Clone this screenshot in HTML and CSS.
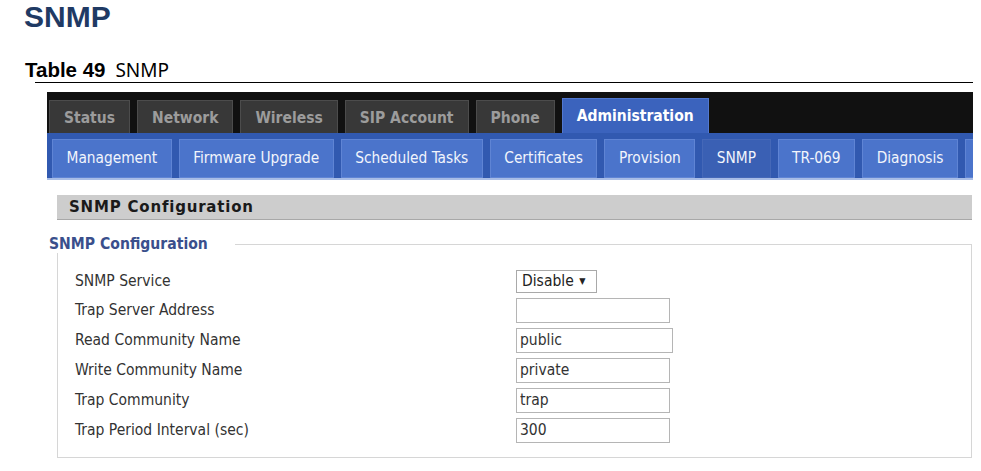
FILE: index.html
```html
<!DOCTYPE html>
<html lang="en">
<head>
  <meta charset="UTF-8">
  <title>SNMP</title>
  <link rel="stylesheet" href="styles.css">
</head>
<body>
  <div class="doc">
    <h1 class="doc-title">SNMP</h1>
    <p class="caption"><b>Table 49</b> <span>SNMP</span></p>

    <div class="shot">
      <!-- main menu -->
      <div class="top-nav">
        <a class="top-tab">Status</a>
        <a class="top-tab">Network</a>
        <a class="top-tab">Wireless</a>
        <a class="top-tab">SIP Account</a>
        <a class="top-tab">Phone</a>
        <a class="top-tab active">Administration</a>
      </div>
      <div class="sub-nav">
        <a class="sub-tab">Management</a>
        <a class="sub-tab">Firmware Upgrade</a>
        <a class="sub-tab">Scheduled Tasks</a>
        <a class="sub-tab">Certificates</a>
        <a class="sub-tab">Provision</a>
        <a class="sub-tab active">SNMP</a>
        <a class="sub-tab">TR-069</a>
        <a class="sub-tab">Diagnosis</a>
        <a class="sub-tab more"></a>
      </div>

      <div class="content">
        <div class="section-head">SNMP Configuration</div>

        <fieldset class="group">
          <legend>SNMP Configuration</legend>
          <div class="form">
            <div class="row row-select">
              <label>SNMP Service</label>
              <div class="select">Disable <span class="arrow">&#9660;</span></div>
            </div>
            <div class="row">
              <label>Trap Server Address</label>
              <input type="text" value="">
            </div>
            <div class="row">
              <label>Read Community Name</label>
              <input type="text" class="wide" value="public">
            </div>
            <div class="row">
              <label>Write Community Name</label>
              <input type="text" value="private">
            </div>
            <div class="row">
              <label>Trap Community</label>
              <input type="text" value="trap">
            </div>
            <div class="row">
              <label>Trap Period Interval (sec)</label>
              <input type="text" value="300">
            </div>
          </div>
        </fieldset>
      </div>
    </div>
  </div>
</body>
</html>
```

FILE: styles.css
```css
body {
  margin: 0;
  background: #fff;
  font-family: "DejaVu Sans Condensed", "DejaVu Sans", sans-serif;
}

.doc {
  width: 981px;
  height: 471px;
  overflow: hidden;
}

.doc-title {
  margin: 0;
  padding: 0 0 0 24px;
  font-family: "Liberation Sans", Arial, sans-serif;
  font-size: 30px;
  font-weight: 700;
  line-height: 34px;
  color: #1f3a64;
}

.caption {
  margin: 26px 8px 0 25px;
  font-size: 20.5px;
  line-height: 20px;
  color: #000;
}

.caption b {
  font-family: "Liberation Sans", Arial, sans-serif;
}

.caption span {
  font-family: "Noto Sans", sans-serif;
  font-size: 19px;
  margin-left: 4px;
}

.caption::after {
  content: "";
  display: block;
  margin: 2px 0 0 10px;
  height: 1px;
  background: #000;
}

.shot {
  margin: 9px 0 0 47px;
  width: 926px;
}

/* dark main menu */
.top-nav {
  display: flex;
  align-items: flex-end;
  gap: 7px;
  height: 41px;
  padding-left: 2px;
  background: #111;
}

.top-tab {
  display: block;
  height: 32px;
  line-height: 34px;
  padding: 0 14px;
  background: #383838;
  border: 1px solid #4c4c4c;
  border-bottom: none;
  color: #9c9c9c;
  font-weight: 700;
  font-size: 15.5px;
}

.top-tab.active {
  height: 34px;
  line-height: 34px;
  background: #3b63bd;
  border-color: #5278cf;
  color: #fff;
}

/* blue submenu */
.sub-nav {
  display: flex;
  gap: 7px;
  height: 47px;
  padding: 6px 0 0 5px;
  box-sizing: border-box;
  background: #3159b0;
  border-bottom: 2px solid #a9bde6;
  overflow: hidden;
  white-space: nowrap;
}

.sub-tab {
  display: block;
  flex: none;
  height: 37px;
  line-height: 37px;
  padding: 0 13.5px;
  background: #4b74cb;
  border: 1px solid #5f84d4;
  color: #f2f5fc;
  font-size: 15.3px;
}

.sub-tab.active {
  background: #3a60b4;
  border-color: #4568b8;
}

.sub-tab.more {
  width: 60px;
}

.content {
  padding: 15px 1px 0 10px;
}

.section-head {
  height: 24px;
  line-height: 25px;
  padding-left: 12px;
  background: #cdcdcd;
  border-bottom: 1px solid #a8a8a8;
  font-family: "DejaVu Sans", sans-serif;
  font-weight: 700;
  font-size: 15px;
  color: #1a1a1a;
  letter-spacing: 0.8px;
}

.group {
  margin: 15px 0 0 0;
  padding: 0 0 12px 17px;
  border: 1px solid #d6d6d6;
  min-width: 0;
}

.group legend {
  margin-left: -26px;
  padding: 0 27px 0 0;
  background: #fff;
  color: #3a4f8c;
  font-weight: 700;
  font-size: 15.6px;
  line-height: 18px;
}

.form {
  margin-top: 14px;
}

.row {
  display: grid;
  grid-template-columns: 441px auto;
  align-items: center;
  height: 30px;
}

.row-select {
  height: 28px;
}

.row label {
  font-size: 15.5px;
  color: #333;
}

.row input {
  width: 154px;
  height: 25px;
  box-sizing: border-box;
  margin: 0;
  padding: 0 3px;
  border: 1px solid #b5b5b5;
  font-family: "DejaVu Sans Condensed", "DejaVu Sans", sans-serif;
  font-size: 15.5px;
  color: #333;
  outline: none;
}

.row input.wide {
  width: 157px;
}

.select {
  width: 81px;
  height: 23px;
  box-sizing: border-box;
  padding: 0 5px;
  border: 1px solid #a9a9a9;
  line-height: 21px;
  font-size: 15.5px;
  color: #222;
  white-space: nowrap;
}

.select .arrow {
  font-size: 9px;
  margin-left: 1px;
  vertical-align: 2px;
}
```
